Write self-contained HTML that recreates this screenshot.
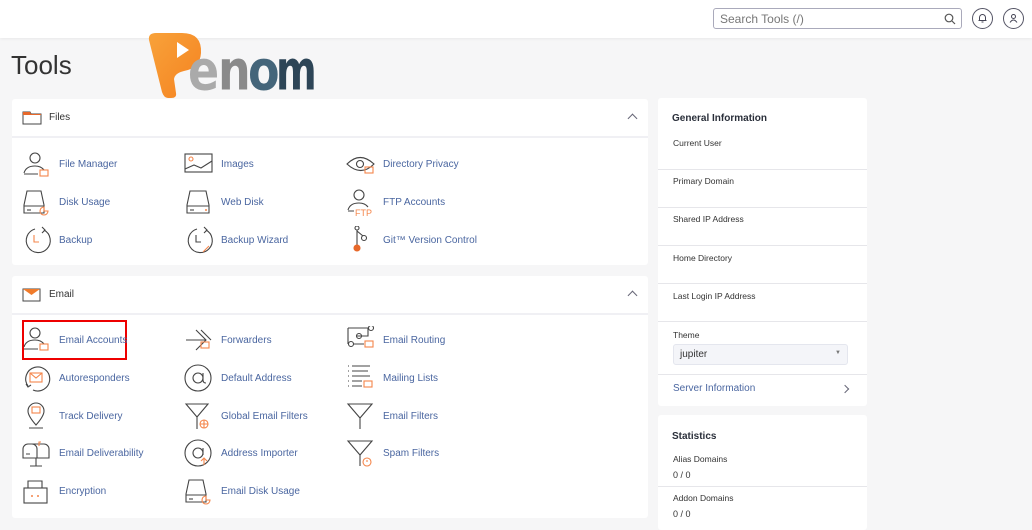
<!DOCTYPE html>
<html><head><meta charset="utf-8"><style>
*{box-sizing:border-box;margin:0;padding:0}
body{width:1032px;height:525px;overflow:hidden;background:#f6f6f7;font-family:"Liberation Sans",sans-serif;position:relative;color:#333}
.hdr{position:absolute;left:0;top:0;width:1032px;height:38px;background:#fff;box-shadow:0 1px 3px rgba(0,0,0,.06)}
.search{position:absolute;left:713px;top:8px;width:249px;height:21px;border:1px solid #aab;border-radius:3px;font-size:12px;color:#777;padding:3px 6px}
.circ{position:absolute;top:8px;width:21px;height:21px;border:1.3px solid #556;border-radius:50%}
.panel{position:absolute;background:#fff;border-radius:3px}
.ph{position:absolute;left:0;right:0;top:0;height:39px;border-bottom:2px solid #f0f0f4}
.pt{position:absolute;left:37px;top:13px;font-size:10px;color:#333}
.caret{position:absolute;right:12px;top:16px;width:7px;height:7px;border-left:1.3px solid #667;border-top:1.3px solid #667;transform:rotate(45deg)}
.it{position:absolute;font-size:10px;color:#4a66a0;line-height:14px}
.it svg{position:absolute;left:0;top:-8px}
.it span{position:absolute;left:37px;top:0;white-space:nowrap}
.r{position:absolute;left:15px;font-size:8.5px;color:#333}
.dv{position:absolute;left:0;right:0;height:1px;background:#e6e6ea}
.lg{position:absolute;top:52px;z-index:6;font-family:"DejaVu Sans",sans-serif;font-weight:bold;font-size:46px;line-height:46px;transform:scaleY(1.2);transform-origin:0 100%}
</style></head><body>
<div class="hdr">
<div class="search">Search Tools (/)<svg style="position:absolute;right:5px;top:4px" width="12" height="12" viewBox="0 0 12 12"><circle cx="5" cy="5" r="3.8" fill="none" stroke="#555" stroke-width="1.2"/><path d="M8 8l3 3" stroke="#555" stroke-width="1.2"/></svg></div>
<div class="circ" style="left:972px"><svg width="19" height="19" viewBox="0 0 19 19"><path d="M6.5 11.5V8.5a3 3 0 016 0v3h1h-8zM8.5 13h2" fill="none" stroke="#445" stroke-width="1"/></svg></div>
<div class="circ" style="left:1003px"><svg width="19" height="19" viewBox="0 0 19 19"><circle cx="9.5" cy="7.5" r="2" fill="none" stroke="#445"/><path d="M6 13.5q3.5-5 7 0" fill="none" stroke="#445"/></svg></div>
</div>
<div style="position:absolute;left:11px;top:50px;font-size:26px;color:#333">Tools</div>

<div class="panel" style="left:12px;top:99px;width:636px;height:166px">
<div class="ph"><svg style="position:absolute;left:10px;top:12px" width="20" height="14" viewBox="0 0 20 14"><path d="M1 1h7l1 2h10v10H1z" fill="none" stroke="#444"/><path d="M1 1h7l1 2h10v1H1z" fill="#e7682a"/></svg><div class="pt">Files</div><div class="caret"></div></div>
</div>
<div class="panel" style="left:12px;top:276px;width:636px;height:242px">
<div class="ph"><svg style="position:absolute;left:10px;top:12px" width="20" height="14" viewBox="0 0 20 14"><rect x="1" y="1" width="17" height="12" fill="none" stroke="#444"/><path d="M1 1h17l-8.5 6z" fill="#f07b2b"/></svg><div class="pt">Email</div><div class="caret"></div></div>
</div>
<div style="position:absolute;left:22px;top:320px;width:105px;height:40px;border:2px solid #e00"></div>

<svg style="position:absolute;left:145px;top:30px;z-index:5" width="60" height="72" viewBox="0 0 60 72">
<defs><linearGradient id="g" x1="0" y1="0" x2="1" y2="1"><stop offset="0" stop-color="#f8a23a"/><stop offset="1" stop-color="#f58220"/></linearGradient></defs>
<path d="M4 10q-1-7 7-7h26q20 0 19 20q-1 15-17 18q-9 2-10 8l2 14q1 5-5 5h-3q-4 0-6-6z" fill="url(#g)"/>
<path d="M32 12l12 8l-12 8z" fill="#fff"/>
</svg>
<div class="lg" style="left:188px;color:#aaa">e</div>
<div class="lg" style="left:218px;color:#8a8a8a">n</div>
<div class="lg" style="left:248px;color:#44657a">o</div>
<div class="lg" style="left:276px;color:#2d4557;transform:scale(0.85,1.2)">m</div>

<!-- files items -->
<div class="it" style="left:22px;top:158px"><svg width="30" height="30" viewBox="0 0 30 30" fill="none" stroke="#444" stroke-width="1.1"><circle cx="13" cy="8" r="5"/><path d="M2 23q2-7 11-7q6 0 9 4M2 24h14"/><rect x="18" y="20" width="8" height="6" stroke="#f4854a"/></svg><span>File Manager</span></div>
<div class="it" style="left:184px;top:158px"><svg width="30" height="30" viewBox="0 0 30 30" fill="none" stroke="#444" stroke-width="1.1"><rect x="1" y="4" width="27" height="18"/><path d="M1 19l9-4l7 3l11-7"/><circle cx="7" cy="9" r="2" stroke="#f4854a"/></svg><span>Images</span></div>
<div class="it" style="left:346px;top:158px"><svg width="30" height="30" viewBox="0 0 30 30" fill="none" stroke="#444" stroke-width="1.1"><path d="M1 14q13-13 27 0q-13 13-27 0z"/><circle cx="14" cy="14" r="3.5"/><rect x="19" y="17" width="8" height="6" stroke="#f4854a"/></svg><span>Directory Privacy</span></div>
<div class="it" style="left:22px;top:196px"><svg width="30" height="30" viewBox="0 0 30 30" fill="none" stroke="#444" stroke-width="1.1"><path d="M5 3h14l3 14v8H2v-8z M2 18h20"/><path d="M5 22h4" /><path d="M22 19a4 4 0 104 4h-4z" stroke="#f4854a"/></svg><span>Disk Usage</span></div>
<div class="it" style="left:184px;top:196px"><svg width="30" height="30" viewBox="0 0 30 30" fill="none" stroke="#444" stroke-width="1.1"><path d="M6 3h16l3 14v8H3v-8z M3 18h22"/><path d="M6 22h4"/><circle cx="22" cy="22" r="1" fill="#f4854a" stroke="none"/></svg><span>Web Disk</span></div>
<div class="it" style="left:346px;top:196px"><svg width="30" height="30" viewBox="0 0 30 30" fill="none" stroke="#444" stroke-width="1.1"><circle cx="13" cy="7" r="5"/><path d="M2 22q2-7 11-7q6 0 9 4M2 23h6"/><text x="9" y="28" font-size="9" fill="#f4854a" stroke="none" font-family="Liberation Sans">FTP</text></svg><span>FTP Accounts</span></div>
<div class="it" style="left:22px;top:234px"><svg width="30" height="30" viewBox="0 0 30 30" fill="none" stroke="#444" stroke-width="1.1"><path d="M22 4a12 12 0 11-9-1"/><path d="M20 1l3 3l-3 3"/><path d="M12 9v7h5" stroke="#f4854a"/></svg><span>Backup</span></div>
<div class="it" style="left:184px;top:234px"><svg width="30" height="30" viewBox="0 0 30 30" fill="none" stroke="#444" stroke-width="1.1"><path d="M22 4a12 12 0 11-9-1"/><path d="M20 1l3 3l-3 3"/><path d="M12 9v7h5"/><path d="M19 26l6-6" stroke="#f4854a"/></svg><span>Backup Wizard</span></div>
<div class="it" style="left:346px;top:234px"><svg width="30" height="30" viewBox="0 0 30 30" fill="none" stroke="#444" stroke-width="1.1"><circle cx="11" cy="2" r="2"/><circle cx="18" cy="12" r="2.5"/><path d="M11 4v16M11 5l6 5"/><circle cx="11" cy="22" r="3" fill="#e7682a" stroke="#e7682a"/></svg><span>Git™ Version Control</span></div>

<!-- email items -->
<div class="it" style="left:22px;top:334px"><svg width="30" height="30" viewBox="0 0 30 30" fill="none" stroke="#444" stroke-width="1.1"><circle cx="13" cy="7" r="5"/><path d="M2 21q2-7 11-7q6 0 9 4M2 23h14"/><rect x="18" y="18" width="8" height="6" stroke="#f4854a"/></svg><span>Email Accounts</span></div>
<div class="it" style="left:184px;top:334px"><svg width="30" height="30" viewBox="0 0 30 30" fill="none" stroke="#444" stroke-width="1.1"><path d="M2 14h20M12 4l10 10l-10 10M17 4l10 10"/><rect x="17" y="16" width="8" height="6" stroke="#f4854a"/></svg><span>Forwarders</span></div>
<div class="it" style="left:346px;top:334px"><svg width="30" height="30" viewBox="0 0 30 30" fill="none" stroke="#444" stroke-width="1.1"><circle cx="25" cy="2" r="2.5"/><circle cx="13" cy="10" r="2.5"/><circle cx="5" cy="18" r="2.5"/><path d="M2 2h20M2 2v16M10 10h12v-8M8 18h10"/><rect x="19" y="15" width="8" height="6" stroke="#f4854a"/></svg><span>Email Routing</span></div>
<div class="it" style="left:22px;top:372px"><svg width="30" height="30" viewBox="0 0 30 30" fill="none" stroke="#444" stroke-width="1.1"><path d="M6 22a12 12 0 1 1 5 4"/><path d="M4 20l2 3l3-2"/><rect x="8" y="9" width="12" height="9" stroke="#f4854a"/><path d="M8 9l6 5l6-5" stroke="#f4854a"/></svg><span>Autoresponders</span></div>
<div class="it" style="left:184px;top:372px"><svg width="30" height="30" viewBox="0 0 30 30" fill="none" stroke="#444" stroke-width="1.1"><circle cx="14" cy="14" r="13"/><circle cx="14" cy="14" r="5"/><path d="M19 9v7q0 3 3 3"/></svg><span>Default Address</span></div>
<div class="it" style="left:346px;top:372px"><svg width="30" height="30" viewBox="0 0 30 30" fill="none" stroke="#444" stroke-width="1.1"><path d="M2 2h1M6 2h18M2 7h1M6 7h16M2 12h1M6 12h18M2 17h1M6 17h10M2 22h1M6 22h10"/><rect x="18" y="17" width="8" height="6" stroke="#f4854a"/></svg><span>Mailing Lists</span></div>
<div class="it" style="left:22px;top:410px"><svg width="30" height="30" viewBox="0 0 30 30" fill="none" stroke="#444" stroke-width="1.1"><path d="M14 23q-8-9-8-14a8 8 0 0116 0q0 5-8 14zM7 26h14"/><rect x="10" y="5" width="8" height="6" stroke="#f4854a"/></svg><span>Track Delivery</span></div>
<div class="it" style="left:184px;top:410px"><svg width="30" height="30" viewBox="0 0 30 30" fill="none" stroke="#444" stroke-width="1.1"><path d="M2 2h22l-11 13zM13 15v12"/><circle cx="20" cy="22" r="4" stroke="#f4854a"/><path d="M16 22h8M20 18v8" stroke="#f4854a"/></svg><span>Global Email Filters</span></div>
<div class="it" style="left:346px;top:410px"><svg width="30" height="30" viewBox="0 0 30 30" fill="none" stroke="#444" stroke-width="1.1"><path d="M2 2h24l-12 14zM14 16v11"/></svg><span>Email Filters</span></div>
<div class="it" style="left:22px;top:447px"><svg width="30" height="30" viewBox="0 0 30 30" fill="none" stroke="#444" stroke-width="1.1"><path d="M6 5a5 5 0 00-5 5v9h26v-9a5 5 0 00-5-5zM10 5a5 5 0 015 5v9M14 19v8M8 27h12M4 15h4"/><path d="M17 7v-4h2" stroke="#f4854a"/></svg><span>Email Deliverability</span></div>
<div class="it" style="left:184px;top:447px"><svg width="30" height="30" viewBox="0 0 30 30" fill="none" stroke="#444" stroke-width="1.1"><circle cx="14" cy="14" r="13"/><circle cx="14" cy="14" r="5"/><path d="M19 9v7"/><path d="M20 26v-6M17 22l3-3l3 3" stroke="#f4854a"/></svg><span>Address Importer</span></div>
<div class="it" style="left:346px;top:447px"><svg width="30" height="30" viewBox="0 0 30 30" fill="none" stroke="#444" stroke-width="1.1"><path d="M2 2h24l-12 14zM14 16v11"/><circle cx="21" cy="23" r="4" stroke="#f4854a"/><path d="M21 21v2" stroke="#f4854a"/></svg><span>Spam Filters</span></div>
<div class="it" style="left:22px;top:485px"><svg width="30" height="30" viewBox="0 0 30 30" fill="none" stroke="#444" stroke-width="1.1"><path d="M6 11v-7h14v7"/><rect x="2" y="11" width="23" height="15"/><circle cx="10" cy="19" r="1" fill="#f4854a" stroke="none"/><circle cx="16" cy="19" r="1" fill="#f4854a" stroke="none"/></svg><span>Encryption</span></div>
<div class="it" style="left:184px;top:485px"><svg width="30" height="30" viewBox="0 0 30 30" fill="none" stroke="#444" stroke-width="1.1"><path d="M5 3h14l3 14v8H2v-8z M2 18h20"/><path d="M5 22h4"/><path d="M22 19a4 4 0 104 4h-4z" stroke="#f4854a"/></svg><span>Email Disk Usage</span></div>

<!-- right panels -->
<div class="panel" style="left:658px;top:98px;width:209px;height:308px">
<div style="position:absolute;left:14px;top:15px;font-size:10px;font-weight:bold;color:#2a2f3a">General Information</div>
<div class="r" style="top:40px">Current User</div>
<div class="dv" style="top:71px"></div>
<div class="r" style="top:78px">Primary Domain</div>
<div class="dv" style="top:109px"></div>
<div class="r" style="top:116px">Shared IP Address</div>
<div class="dv" style="top:147px"></div>
<div class="r" style="top:155px">Home Directory</div>
<div class="dv" style="top:185px"></div>
<div class="r" style="top:193px">Last Login IP Address</div>
<div class="dv" style="top:223px"></div>
<div class="r" style="top:232px">Theme</div>
<div style="position:absolute;left:15px;top:246px;width:175px;height:21px;background:#f4f5f9;border:1px solid #e4e6ee;border-radius:3px;font-size:10px;padding:4px 6px;color:#333">jupiter<span style="position:absolute;right:6px;top:5px;font-size:6px;color:#777">▼</span></div>
<div class="dv" style="top:276px"></div>
<div style="position:absolute;left:15px;top:285px;font-size:10px;color:#4a66a0">Server Information</div>
<div style="position:absolute;left:184px;top:288px;width:6px;height:6px;border-right:1.3px solid #667;border-top:1.3px solid #667;transform:rotate(45deg)"></div>
</div>
<div class="panel" style="left:658px;top:415px;width:209px;height:115px">
<div style="position:absolute;left:14px;top:16px;font-size:10px;font-weight:bold;color:#2a2f3a">Statistics</div>
<div class="r" style="top:39px">Alias Domains</div>
<div class="r" style="top:55px;font-size:9px">0 / 0</div>
<div class="dv" style="top:71px"></div>
<div class="r" style="top:78px">Addon Domains</div>
<div class="r" style="top:94px;font-size:9px">0 / 0</div>
</div>
</body></html>
